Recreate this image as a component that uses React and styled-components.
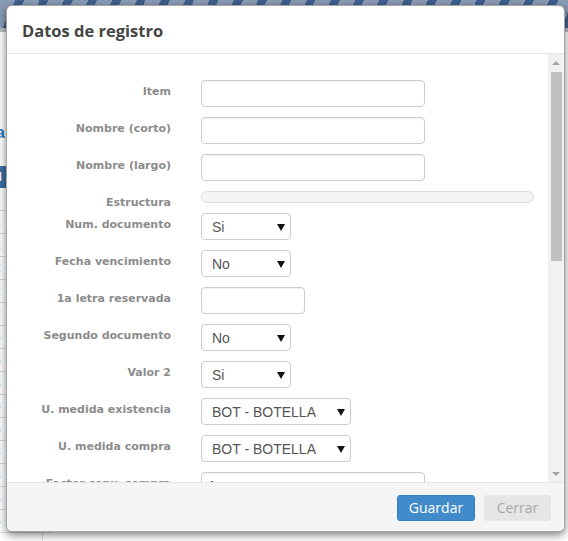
import React from "react";
import styled, { createGlobalStyle } from "styled-components";

const GlobalStyle = createGlobalStyle`
  html, body {
    margin: 0;
    padding: 0;
    background: #fff;
    font-family: "Liberation Sans", Arial, sans-serif;
  }
  * { box-sizing: border-box; }
`;

const tableRows = ["1", "1", "2", "2", "2", "2", "3", "3", "3", "3", "3", "3", "3", "3", "3"];

const fields = [
  { label: "Item", type: "input", width: 224 },
  { label: "Nombre (corto)", type: "input", width: 224 },
  { label: "Nombre (largo)", type: "input", width: 224 },
  { label: "Estructura", type: "progress" },
  { label: "Num. documento", type: "select", width: 90, value: "Si" },
  { label: "Fecha vencimiento", type: "select", width: 90, value: "No" },
  { label: "1a letra reservada", type: "input", width: 104 },
  { label: "Segundo documento", type: "select", width: 90, value: "No" },
  { label: "Valor 2", type: "select", width: 90, value: "Si" },
  { label: "U. medida existencia", type: "select", width: 150, value: "BOT - BOTELLA" },
  { label: "U. medida compra", type: "select", width: 150, value: "BOT - BOTELLA" },
  { label: "Factor conv. compra", type: "input", width: 224, value: "1" },
];

const App = () => {
  return (
    <>
      <GlobalStyle />
      <Page>
        <Banner />
        <NavLine />
        <LinkText>a</LinkText>
        <Table>
          <HeadCell>d</HeadCell>
          {tableRows.map((n, i) => (
            <Cell key={i}>{n}</Cell>
          ))}
        </Table>
        <ColumnLine />

        <Modal>
          <Header>
            <Title>Datos de registro</Title>
          </Header>
          <Body>
            <Form>
              {fields.map((f) => (
                <React.Fragment key={f.label}>
                  <Label>{f.label}</Label>
                  <Control>
                    {f.type === "input" && (
                      <TextInput $width={f.width} defaultValue={f.value || ""} />
                    )}
                    {f.type === "progress" && <Progress />}
                    {f.type === "select" && (
                      <SelectWrap $width={f.width}>
                        <Select defaultValue={f.value}>
                          <option>{f.value}</option>
                        </Select>
                      </SelectWrap>
                    )}
                  </Control>
                </React.Fragment>
              ))}
            </Form>
            <Scrollbar>
              <Arrow $up />
              <Thumb />
              <Spacer />
              <Arrow />
            </Scrollbar>
          </Body>
          <Footer>
            <Button $primary>Guardar</Button>
            <Button>Cerrar</Button>
          </Footer>
        </Modal>
      </Page>
    </>
  );
};

const Page = styled.div`
  position: relative;
  width: 568px;
  height: 541px;
  overflow: hidden;
  background: #fff;
`;

const Banner = styled.div`
  height: 28px;
  background: repeating-linear-gradient(
    115deg,
    #8a9bb5 0px,
    #8a9bb5 14px,
    #3f5f8f 14px,
    #3f5f8f 22px
  );
`;

const NavLine = styled.div`
  height: 4px;
  background: #b8bec7;
`;

const LinkText = styled.div`
  margin: 92px 0 0 -4px;
  height: 20px;
  color: #2a7ac0;
  font-size: 16px;
  font-weight: bold;
`;

const Table = styled.div`
  margin: 22px 0 0 -6px;
  width: 60px;
  display: flex;
  flex-direction: column;
`;

const HeadCell = styled.div`
  height: 22px;
  background: #3a6fa5;
  color: #fff;
  font-weight: bold;
  font-size: 13px;
  line-height: 22px;
`;

const Cell = styled.div`
  height: 23px;
  border-bottom: 1px solid #ddd;
  color: #666;
  font-size: 12px;
  line-height: 23px;
`;

const ColumnLine = styled.div`
  position: absolute;
  left: 42px;
  top: 520px;
  width: 1px;
  height: 30px;
  background: #ddd;
`;

const Modal = styled.div`
  position: absolute;
  left: 6px;
  top: 5px;
  width: 559px;
  height: 527px;
  display: flex;
  flex-direction: column;
  background: #fff;
  border: 1px solid rgba(0, 0, 0, 0.35);
  border-radius: 6px;
  box-shadow: 0 3px 9px rgba(0, 0, 0, 0.5);
  overflow: hidden;
`;

const Header = styled.div`
  height: 48px;
  flex: none;
  display: flex;
  align-items: center;
  padding: 0 15px;
  border-bottom: 1px solid #e5e5e5;
`;

const Title = styled.h4`
  margin: 2px 0 0;
  font-family: "Open Sans", sans-serif;
  font-weight: 700;
  font-size: 16.5px;
  color: #454545;
`;

const Body = styled.div`
  flex: 1;
  display: flex;
  min-height: 0;
`;

const Form = styled.div`
  flex: 1;
  overflow: hidden;
  padding-top: 26px;
  display: grid;
  grid-template-columns: 164px 1fr;
  column-gap: 30px;
  row-gap: 10px;
  align-content: start;
`;

const Label = styled.label`
  height: 12px;
  overflow: visible;
  text-align: right;
  padding-top: 5px;
  font-family: "DejaVu Sans", Verdana, sans-serif;
  font-weight: bold;
  font-size: 11px;
  line-height: 14px;
  color: #8c8c8c;
  white-space: nowrap;
`;

const Control = styled.div`
  display: flex;
`;

const TextInput = styled.input`
  width: ${(p) => p.$width}px;
  height: 27px;
  padding: 0 6px;
  border: 1px solid #ccc;
  border-radius: 4px;
  box-shadow: inset 0 1px 1px rgba(0, 0, 0, 0.06);
  font-family: "Liberation Sans", Arial, sans-serif;
  font-size: 14px;
  color: #555;
  outline: none;
`;

const Progress = styled.div`
  width: 333px;
  height: 12px;
  border: 1px solid #ddd;
  border-radius: 6px;
  background: #f5f5f5;
`;

const SelectWrap = styled.div`
  position: relative;
  width: ${(p) => p.$width}px;
  &::after {
    content: "";
    position: absolute;
    right: 6px;
    top: 11px;
    border-left: 4px solid transparent;
    border-right: 4px solid transparent;
    border-top: 7px solid #111;
    pointer-events: none;
  }
`;

const Select = styled.select`
  appearance: none;
  width: 100%;
  height: 27px;
  padding: 0 10px;
  border: 1px solid #ccc;
  border-radius: 4px;
  background: #fff;
  font-family: "Liberation Sans", Arial, sans-serif;
  font-size: 14px;
  color: #555;
  outline: none;
`;

const Scrollbar = styled.div`
  width: 16px;
  flex: none;
  display: flex;
  flex-direction: column;
  background: #f1f1f1;
`;

const Arrow = styled.div`
  height: 17px;
  flex: none;
  display: flex;
  align-items: center;
  justify-content: center;
  &::before {
    content: "";
    border-left: 4px solid transparent;
    border-right: 4px solid transparent;
    ${(p) =>
      p.$up ? "border-bottom: 4px solid #a3a3a3;" : "border-top: 4px solid #a3a3a3;"}
  }
`;

const Thumb = styled.div`
  height: 189px;
  margin: 1px 2px 0 3px;
  background: #c1c1c1;
`;

const Spacer = styled.div`
  flex: 1;
`;

const Footer = styled.div`
  height: 49px;
  flex: none;
  display: flex;
  justify-content: flex-end;
  align-items: flex-start;
  gap: 9px;
  padding: 12px 13px 0;
  border-top: 1px solid #e5e5e5;
  background: #f5f5f5;
`;

const Button = styled.button`
  height: 26px;
  padding: 0 8px;
  border-radius: 3px;
  border: 1px solid ${(p) => (p.$primary ? "#357ebd" : "#e6e6e6")};
  background: ${(p) => (p.$primary ? "#428bca" : "#e6e6e6")};
  color: ${(p) => (p.$primary ? "#fff" : "#a6a6a6")};
  font-family: "Open Sans", sans-serif;
  font-size: 14px;
  line-height: 24px;
  width: ${(p) => (p.$primary ? 78 : 67)}px;
`;

export default App;
